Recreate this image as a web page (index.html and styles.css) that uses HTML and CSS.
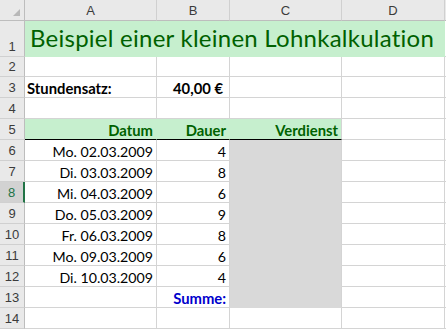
FILE: index.html
```html
<!DOCTYPE html>
<html lang="de">
<head>
<meta charset="utf-8">
<title>Lohnkalkulation</title>
<link rel="stylesheet" href="styles.css">
</head>
<body>
<div class="sheet">
  <div class="corner"><span class="tri"></span></div>
  <div class="ch">A</div><div class="ch">B</div><div class="ch">C</div><div class="ch">D</div><div class="ch"></div>

  <div class="rh">1</div>
  <div class="c title">Beispiel einer kleinen Lohnkalkulation</div>
  <div class="c"></div>

  <div class="rh">2</div>
  <div class="c"></div><div class="c"></div><div class="c"></div><div class="c"></div><div class="c"></div>

  <div class="rh">3</div>
  <div class="c b">Stundensatz:</div><div class="c b r rate">40,00 €</div><div class="c"></div><div class="c"></div><div class="c"></div>

  <div class="rh">4</div>
  <div class="c"></div><div class="c"></div><div class="c"></div><div class="c"></div><div class="c"></div>

  <div class="rh">5</div>
  <div class="c hd r">Datum</div><div class="c hd r">Dauer</div><div class="c hd r hd-last">Verdienst</div><div class="c"></div><div class="c"></div>

  <div class="rh">6</div>
  <div class="c r">Mo. 02.03.2009</div><div class="c r">4</div><div class="c grey"></div><div class="c"></div><div class="c"></div>

  <div class="rh">7</div>
  <div class="c r">Di. 03.03.2009</div><div class="c r">8</div><div class="c grey"></div><div class="c"></div><div class="c"></div>

  <div class="rh sel">8</div>
  <div class="c r">Mi. 04.03.2009</div><div class="c r">6</div><div class="c grey"></div><div class="c"></div><div class="c"></div>

  <div class="rh">9</div>
  <div class="c r">Do. 05.03.2009</div><div class="c r">9</div><div class="c grey"></div><div class="c"></div><div class="c"></div>

  <div class="rh">10</div>
  <div class="c r">Fr. 06.03.2009</div><div class="c r">8</div><div class="c grey"></div><div class="c"></div><div class="c"></div>

  <div class="rh">11</div>
  <div class="c r">Mo. 09.03.2009</div><div class="c r">6</div><div class="c grey"></div><div class="c"></div><div class="c"></div>

  <div class="rh">12</div>
  <div class="c r">Di. 10.03.2009</div><div class="c r">4</div><div class="c grey"></div><div class="c"></div><div class="c"></div>

  <div class="rh">13</div>
  <div class="c"></div><div class="c b r sum">Summe:</div><div class="c grey"></div><div class="c"></div><div class="c"></div>

  <div class="rh">14</div>
  <div class="c"></div><div class="c"></div><div class="c"></div><div class="c"></div><div class="c"></div>
</div>
</body>
</html>
```

FILE: styles.css
```css
html, body {
  margin: 0;
  padding: 0;
  background: #ffffff;
  overflow: hidden;
}

.sheet {
  display: grid;
  grid-template-columns: 25px 132px 73px 112px 103px 1fr;
  grid-template-rows: 21px 36px 20px repeat(12, 21px);
  width: 446px;
}

.corner,
.ch,
.rh {
  box-sizing: border-box;
  background: #e9e9e9;
  color: #3b3b3b;
  font-family: "Liberation Sans", Arial, sans-serif;
  font-size: 13px;
  display: flex;
  justify-content: center;
}

.corner {
  position: relative;
  border-right: 1px solid #bdbdbd;
  border-bottom: 1px solid #bdbdbd;
}

.tri {
  position: absolute;
  right: 4px;
  bottom: 4px;
  width: 0;
  height: 0;
  border-left: 7px solid transparent;
  border-bottom: 7px solid #b8b8b8;
}

.ch {
  align-items: center;
  border-right: 1px solid #d0d0d0;
  border-bottom: 1px solid #bdbdbd;
  padding-top: 1px;
}

.rh {
  align-items: flex-end;
  padding-bottom: 1px;
  border-right: 1px solid #bdbdbd;
  border-bottom: 1px solid #d0d0d0;
  line-height: 16px;
}

.rh.sel {
  background: #d2d2d2;
  color: #217346;
  border-right: 2px solid #217346;
}

.c {
  box-sizing: border-box;
  border-right: 1px solid #d4d4d4;
  border-bottom: 1px solid #d4d4d4;
  display: flex;
  align-items: flex-end;
  padding: 0 3px 0 2px;
  font-family: Lato, "Open Sans", sans-serif;
  font-size: 14.2px;
  line-height: 17px;
  color: #000000;
  white-space: nowrap;
  overflow: visible;
}

.r {
  justify-content: flex-end;
}

.b {
  font-weight: 700;
  font-size: 14.8px;
}

.rate {
  padding-right: 6px;
}

.title {
  grid-column: 2 / 6;
  background: #c6efce;
  border-right-color: #c6efce;
  border-bottom-color: #c6efce;
  color: #006100;
  font-size: 24px;
  letter-spacing: 0.25px;
  line-height: 28px;
  padding: 0 0 4px 5px;
}

.hd {
  background: #c6efce;
  color: #006100;
  font-weight: 700;
  font-size: 14.8px;
  border-right-color: #c6efce;
  border-bottom: 1px solid #000000;
}

.hd-last {
  border-right-color: #d4d4d4;
}

.grey {
  background: #d9d9d9;
  border-bottom-color: #d9d9d9;
}

.sum {
  color: #0000cc;
}
```
